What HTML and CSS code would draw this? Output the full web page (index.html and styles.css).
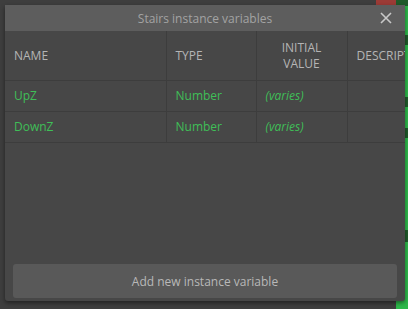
FILE: index.html
```html
<!DOCTYPE html>
<html>
  <head>
    <meta charset="UTF-8" />
    <title>Stairs instance variables</title>
    <link rel="stylesheet" href="styles.css">
  </head>
  <body>
    <div class="backdrop">
      <div class="bg-red"></div>
      <div class="bg-green"></div>
    </div>
    <div class="dialog">
      <div class="dialog-title">
        <span>Stairs instance variables</span>
        <div class="close-button">
          <svg width="12" height="12" viewBox="0 0 12 12">
            <path d="M1 1 L11 11 M11 1 L1 11" stroke="#c8c8c8" stroke-width="1.6" />
          </svg>
        </div>
      </div>
      <div class="table-wrap">
        <table class="var-table">
          <thead>
            <tr>
              <th class="col-name">NAME</th>
              <th class="col-type">TYPE</th>
              <th class="col-value">INITIAL<br />VALUE</th>
              <th class="col-desc">DESCRIPTION</th>
            </tr>
          </thead>
          <tbody>
            <tr>
              <td>UpZ</td>
              <td>Number</td>
              <td class="varies">(varies)</td>
              <td></td>
            </tr>
            <tr>
              <td>DownZ</td>
              <td>Number</td>
              <td class="varies">(varies)</td>
              <td></td>
            </tr>
          </tbody>
        </table>
      </div>
      <button class="add-button">Add new instance variable</button>
    </div>
  </body>
</html>
```

FILE: styles.css
```css
* {
  box-sizing: border-box;
  margin: 0;
  padding: 0;
}

body {
  width: 408px;
  height: 309px;
  overflow: hidden;
  background-color: #3e3e3e;
  font-family: 'Open Sans', 'Noto Sans', Arial, sans-serif;
  position: relative;
}

/* scene behind the dialog */
.backdrop {
  position: absolute;
  inset: 0;
}

.bg-red {
  position: absolute;
  left: 376px;
  top: 0;
  width: 20px;
  height: 6px;
  background-color: #9b3b36;
}

.bg-green {
  position: absolute;
  left: 396px;
  top: 0;
  width: 12px;
  height: 309px;
  background: linear-gradient(
    to bottom,
    #1f5a2a 0px, #1f5a2a 6px,
    #2db84a 6px, #2db84a 35px,
    #1f5a2a 35px, #1f5a2a 45px,
    #2db84a 45px, #2db84a 97px,
    #1f5a2a 97px, #1f5a2a 107px,
    #2db84a 107px, #2db84a 128px,
    #1f5a2a 128px, #1f5a2a 138px,
    #2db84a 138px, #2db84a 230px,
    #1f5a2a 230px, #1f5a2a 242px,
    #2db84a 242px
  );
}

.dialog {
  position: relative;
  margin: 5px 0 0 5px;
  width: 400px;
  height: 296px;
  background-color: #474747;
  border-radius: 0 0 3px 3px;
  box-shadow: 0 2px 4px rgba(0, 0, 0, 0.45);
  display: flex;
  flex-direction: column;
  overflow: hidden;
}

.dialog-title {
  height: 26px;
  background-color: #5d5d5d;
  color: #a3a3a3;
  font-size: 12px;
  display: flex;
  align-items: center;
  justify-content: center;
  position: relative;
}

.close-button {
  position: absolute;
  right: 13px;
  top: 7px;
  width: 12px;
  height: 12px;
  display: flex;
}

.table-wrap {
  flex: 1;
  overflow: hidden;
}

.var-table {
  border-collapse: collapse;
  table-layout: fixed;
  width: 460px;
  font-size: 12px;
}

.var-table th {
  height: 49px;
  padding: 2px 9px 0 9px;
  font-weight: normal;
  color: #b5b5b5;
  text-align: left;
  line-height: 16px;
  border-right: 1px solid #3d3d3d;
  border-bottom: 1px solid #3d3d3d;
  white-space: nowrap;
}

.var-table th.col-value {
  text-align: center;
}

.col-name { width: 161px; }
.col-type { width: 90px; }
.col-value { width: 91px; }
.col-desc { width: 118px; }

.var-table td {
  height: 31px;
  color: #3fbf57;
  padding: 0 9px;
  border-right: 1px solid #3d3d3d;
  border-bottom: 1px solid #3d3d3d;
}

.var-table td.varies {
  font-style: italic;
}

.add-button {
  margin: 0 8px 3px 8px;
  height: 34px;
  border: none;
  border-radius: 3px;
  background-color: #595959;
  color: #b8b8b8;
  font-family: 'Open Sans', 'Noto Sans', Arial, sans-serif;
  font-size: 12px;
}
```
